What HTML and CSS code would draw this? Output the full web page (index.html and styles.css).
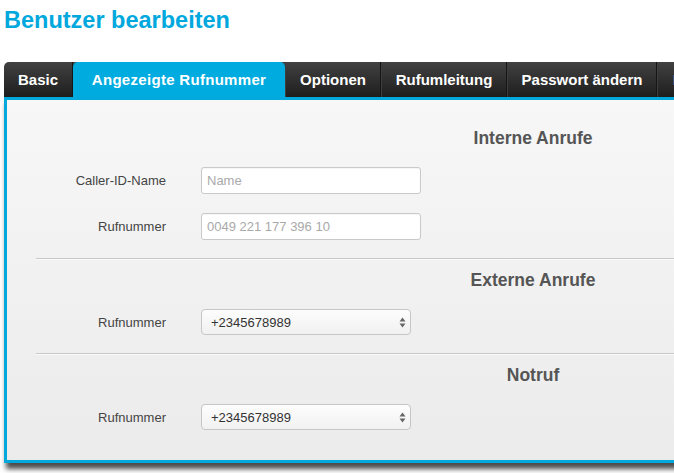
FILE: index.html
```html
<!DOCTYPE html>
<html lang="de">
<head>
<meta charset="utf-8">
<title>Benutzer bearbeiten</title>
<link rel="stylesheet" href="styles.css">
</head>
<body>
<h1 class="page-title">Benutzer bearbeiten</h1>
<div class="editor">
  <ul class="tabs">
    <li class="tab tab-basic">Basic</li>
    <li class="tab tab-number active">Angezeigte Rufnummer</li>
    <li class="tab tab-options">Optionen</li>
    <li class="tab tab-forward">Rufumleitung</li>
    <li class="tab tab-password">Passwort ändern</li>
    <li class="tab tab-more">Mehr</li>
  </ul>
  <div class="panel">
    <section class="group">
      <h2 class="group-title">Interne Anrufe</h2>
      <div class="field">
        <label class="field-label">Caller-ID-Name</label>
        <input class="text-input" type="text" placeholder="Name">
      </div>
      <div class="field">
        <label class="field-label">Rufnummer</label>
        <input class="text-input" type="text" placeholder="0049 221 177 396 10">
      </div>
    </section>
    <hr class="divider">
    <section class="group">
      <h2 class="group-title">Externe Anrufe</h2>
      <div class="field">
        <label class="field-label">Rufnummer</label>
        <span class="select-wrap">
          <select class="select"><option>+2345678989</option></select>
          <svg class="select-arrows" width="7" height="11" viewBox="0 0 7 11"><path d="M3.5 0.5L6.5 4.5H0.5Z M3.5 10.5L0.5 6.5H6.5Z" fill="#666"/></svg>
        </span>
      </div>
    </section>
    <hr class="divider">
    <section class="group">
      <h2 class="group-title">Notruf</h2>
      <div class="field">
        <label class="field-label">Rufnummer</label>
        <span class="select-wrap">
          <select class="select"><option>+2345678989</option></select>
          <svg class="select-arrows" width="7" height="11" viewBox="0 0 7 11"><path d="M3.5 0.5L6.5 4.5H0.5Z M3.5 10.5L0.5 6.5H6.5Z" fill="#666"/></svg>
        </span>
      </div>
    </section>
  </div>
</div>
</body>
</html>
```

FILE: styles.css
```css
html, body {
  margin: 0;
  padding: 0;
  background: #fff;
  overflow: hidden;
}
body {
  font-family: "Liberation Sans", Arial, sans-serif;
  width: 674px;
  height: 473px;
}
.page-title {
  margin: 0;
  padding: 6px 4px 0;
  font-size: 23.5px;
  line-height: 28px;
  font-weight: bold;
  color: #00a8dd;
}
.editor {
  margin: 28px 0 0 4px;
  width: 900px;
}
.tabs {
  list-style: none;
  margin: 0;
  padding: 0;
  display: flex;
  height: 35px;
  background: linear-gradient(#414141, #1e1e1e);
  border-top-left-radius: 5px;
}
.tab {
  box-sizing: border-box;
  padding: 0;
  text-align: center;
  line-height: 35px;
  font-size: 15px;
  font-weight: bold;
  color: #fff;
  border-right: 1px solid #151515;
  border-left: 1px solid #3e3e3e;
  white-space: nowrap;
}
.tab-basic {
  width: 69px;
  border-left: none;
  border-top-left-radius: 5px;
}
.tab-number { width: 212px; letter-spacing: 0.3px; }
.tab-options { width: 96px; }
.tab-forward { width: 126px; }
.tab-password { width: 150px; }
.tab-more { width: 120px; text-align: left; padding-left: 15px; }
.tab.active {
  background: #00acdf;
  border-color: #00acdf;
  border-radius: 5px 5px 0 0;
}
.panel {
  border: 3px solid #03a9dc;
  border-right: none;
  background: linear-gradient(#f7f7f7, #ebebeb);
  padding: 28px 0 30px;
  box-shadow: 2px 6px 5px rgba(0, 0, 0, 0.7);
}
.group {
  display: flex;
  flex-direction: column;
  gap: 19px;
}
.group-title {
  margin: 0 0 0 390px;
  width: 272px;
  text-align: center;
  font-size: 17.5px;
  line-height: 20px;
  font-weight: bold;
  color: #555;
}
.field {
  display: grid;
  grid-template-columns: 159px auto;
  column-gap: 35px;
  align-items: center;
  justify-items: start;
}
.field-label {
  justify-self: end;
  font-size: 13px;
  color: #444;
}
.text-input {
  box-sizing: border-box;
  width: 220px;
  height: 27px;
  margin: 0;
  padding: 0 5px;
  border: 1px solid #c9c9c9;
  border-radius: 3px;
  background: #fff;
  font-family: "Liberation Sans", Arial, sans-serif;
  font-size: 13px;
  color: #333;
  box-shadow: inset 0 1px 1px rgba(0, 0, 0, 0.04);
}
.text-input::placeholder {
  color: #a9a9a9;
}
.select-wrap {
  position: relative;
  display: inline-block;
  height: 26px;
}
.select {
  box-sizing: border-box;
  appearance: none;
  -webkit-appearance: none;
  width: 210px;
  height: 26px;
  margin: 0;
  padding: 0 9px;
  border: 1px solid #c6c6c6;
  border-radius: 4px;
  background: linear-gradient(#fdfdfd, #f1f1f1);
  font-family: "Liberation Sans", Arial, sans-serif;
  font-size: 13px;
  color: #333;
}
.select-arrows {
  position: absolute;
  right: 5px;
  top: 8px;
  pointer-events: none;
}
.divider {
  margin: 18px 0 10px 29px;
  border: none;
  border-top: 1px solid #c8c8c8;
  border-bottom: 1px solid #fafafa;
  height: 0;
}
```
